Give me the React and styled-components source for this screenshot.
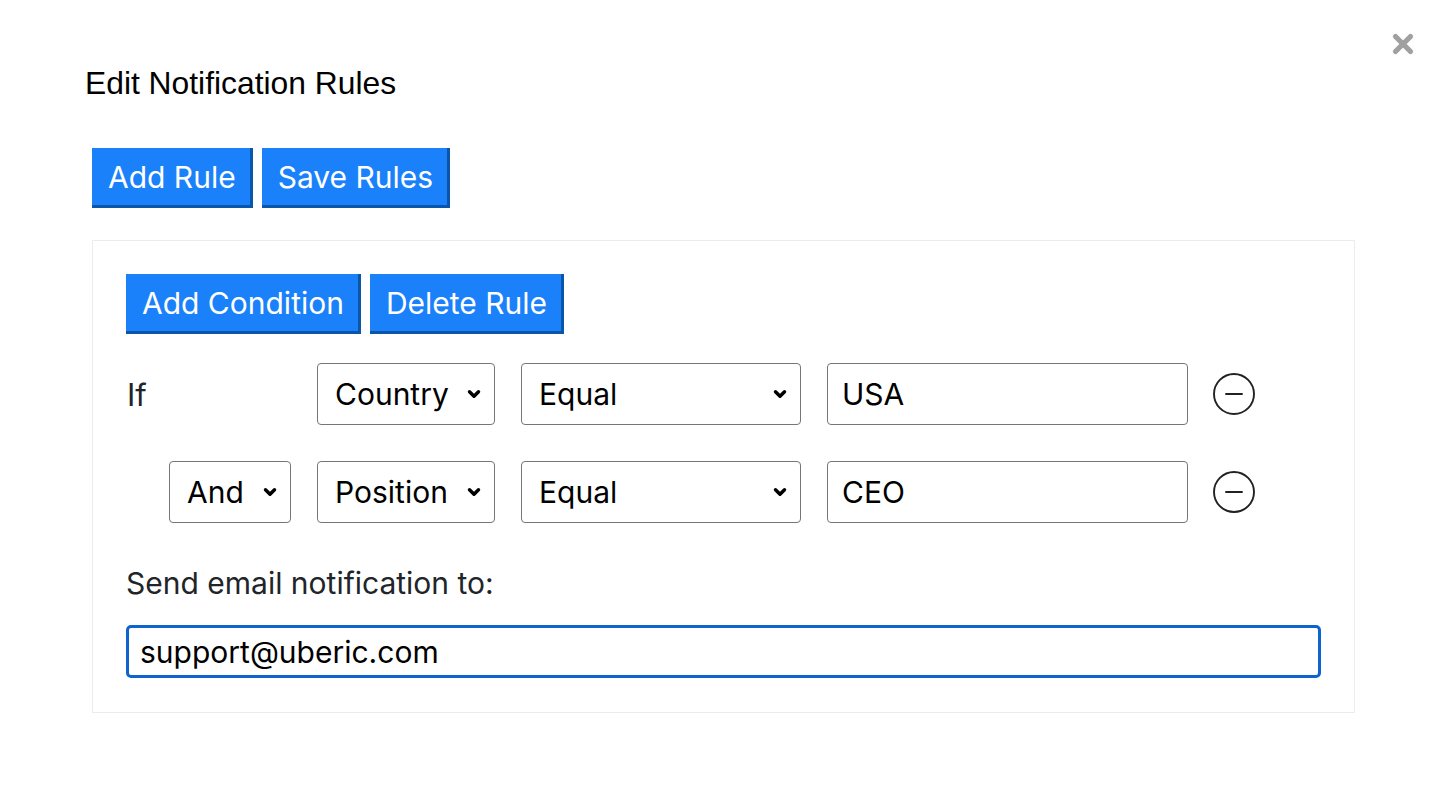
import React from "react"
import styled, { createGlobalStyle } from "styled-components"
import { CircleMinus, ChevronDown, X } from "lucide-react"

const GlobalStyle = createGlobalStyle`
  html, body {
    margin: 0;
    padding: 0;
    background: #fff;
  }
  body {
    font-family: Inter, "Noto Sans", sans-serif;
    color: #212529;
  }
`

const rows = [
  { lead: "If", field: "Country", op: "Equal", value: "USA" },
  { lead: "And", field: "Position", op: "Equal", value: "CEO" },
]

const App = () => {
  return (
    <Page>
      <GlobalStyle />
      <CloseButton aria-label="Close">
        <X size={30} strokeWidth={4.2} />
      </CloseButton>
      <Title>Edit Notification Rules</Title>
      <Toolbar $inset>
        <Button>Add Rule</Button>
        <Button>Save Rules</Button>
      </Toolbar>
      <Panel>
        <Toolbar>
          <Button>Add Condition</Button>
          <Button>Delete Rule</Button>
        </Toolbar>
        <Conditions>
          {rows.map((r, i) => (
            <ConditionRow key={i}>
              {r.lead === "If" ? (
                <Lead>If</Lead>
              ) : (
                <SelectBox $indent>
                  <Select defaultValue={r.lead}>
                    <option>And</option>
                    <option>Or</option>
                  </Select>
                  <Chevron size={18} strokeWidth={4.6} />
                </SelectBox>
              )}
              <SelectBox>
                <Select defaultValue={r.field}>
                  <option>Country</option>
                  <option>Position</option>
                </Select>
                <Chevron size={18} strokeWidth={4.6} />
              </SelectBox>
              <SelectBox>
                <Select defaultValue={r.op}>
                  <option>Equal</option>
                  <option>Not Equal</option>
                </Select>
                <Chevron size={18} strokeWidth={4.6} />
              </SelectBox>
              <TextInput defaultValue={r.value} />
              <RemoveButton aria-label="Remove condition">
                <CircleMinus size={52} strokeWidth={0.95} />
              </RemoveButton>
            </ConditionRow>
          ))}
        </Conditions>
        <Label>Send email notification to:</Label>
        <EmailInput defaultValue="support@uberic.com" />
      </Panel>
    </Page>
  )
}

const Page = styled.div`
  position: relative;
  width: 1448px;
  height: 788px;
  padding: 64px 0 0 85px;
  box-sizing: border-box;
`

const CloseButton = styled.button`
  position: absolute;
  top: 29px;
  right: 30px;
  padding: 0;
  border: 0;
  background: none;
  color: #a0a0a0;
  display: flex;
`

const Title = styled.h1`
  margin: 0 0 46px;
  font-family: "Liberation Sans", Arial, sans-serif;
  font-weight: 400;
  font-size: 31.8px;
  line-height: 38px;
  color: #000;
`

const Toolbar = styled.div`
  display: flex;
  gap: 9px;
  margin-left: ${(p) => (p.$inset ? "7px" : "0")};
`

const Button = styled.button`
  height: 60px;
  padding: 0 14px 0 16px;
  font-family: Inter, "Noto Sans", sans-serif;
  font-size: 30px;
  color: #fff;
  background: #1a81fb;
  border-style: solid;
  border-width: 0 3px 3px 0;
  border-color: #0b56a9;
  border-radius: 0;
`

const Panel = styled.section`
  width: 1263px;
  box-sizing: border-box;
  margin: 32px 0 0 7px;
  padding: 33px 33px 34px;
  border: 1px solid #ececec;
  ${Toolbar} {
    margin-bottom: 29px;
  }
`

const Conditions = styled.div`
  display: flex;
  flex-direction: column;
  gap: 36px;
  margin-bottom: 42px;
`

const ConditionRow = styled.div`
  display: grid;
  grid-template-columns: 165px 178px 280px 361px 44px;
  column-gap: 26px;
  align-items: center;
`

const Lead = styled.span`
  font-size: 31px;
  padding-left: 1px;
  color: #212529;
`

const SelectBox = styled.div`
  position: relative;
  height: 62px;
  margin-left: ${(p) => (p.$indent ? "43px" : "0")};
`

const Select = styled.select`
  appearance: none;
  width: 100%;
  height: 100%;
  box-sizing: border-box;
  padding: 0 40px 0 17px;
  font-family: Inter, "Noto Sans", sans-serif;
  font-size: 30px;
  color: #000;
  background: #fff;
  border: 1.5px solid #767676;
  border-radius: 4px;
`

const Chevron = styled(ChevronDown)`
  position: absolute;
  right: 12px;
  top: 22px;
  color: #000;
  pointer-events: none;
`

const TextInput = styled.input`
  height: 62px;
  box-sizing: border-box;
  padding: 0 14px;
  font-family: Inter, "Noto Sans", sans-serif;
  font-size: 30px;
  color: #000;
  border: 1.5px solid #767676;
  border-radius: 4px;
  outline: none;
`

const RemoveButton = styled.button`
  padding: 0;
  border: 0;
  background: none;
  color: #222;
  display: flex;
  margin-left: -4px;
`

const Label = styled.div`
  font-size: 30px;
  line-height: 36px;
  margin-bottom: 24px;
  color: #212529;
`

const EmailInput = styled.input`
  display: block;
  width: 100%;
  height: 53px;
  box-sizing: border-box;
  padding: 0 11px;
  font-family: Inter, "Noto Sans", sans-serif;
  font-size: 30px;
  color: #000;
  border: 3px solid #0f63cf;
  border-radius: 5px;
  outline: none;
`

export default App
